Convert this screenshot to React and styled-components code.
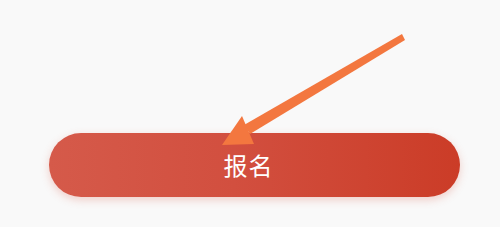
import React from 'react';
import styled, { createGlobalStyle } from 'styled-components';

const GlobalStyle = createGlobalStyle`
  html, body {
    margin: 0;
    padding: 0;
    background: #f9f9f9;
  }
`;

const Page = styled.div`
  position: relative;
  width: 500px;
  height: 227px;
  background: #f9f9f9;
  overflow: hidden;
  padding-top: 133px;
  box-sizing: border-box;
`;

const SignUpButton = styled.button`
  display: flex;
  align-items: center;
  justify-content: center;
  width: 411px;
  height: 64px;
  margin-left: 49px;
  padding: 0 12px 2px 0;
  border: none;
  border-radius: 32px;
  background: linear-gradient(90deg, #d55a4a 0%, #d24f3f 45%, #cb3c27 100%);
  box-shadow: 0 3px 8px rgba(214, 80, 60, 0.25);
  color: #fff;
  font-family: "Noto Sans CJK SC", "Noto Sans", sans-serif;
  font-size: 24px;
  letter-spacing: 1px;
`;

const Annotation = styled.svg`
  position: absolute;
  left: 0;
  top: 0;
  width: 500px;
  height: 227px;
  pointer-events: none;
`;

export default function App() {
  return (
    <>
      <GlobalStyle />
      <Page>
        <SignUpButton>报名</SignUpButton>
        <Annotation viewBox="0 0 500 227">
          <polygon points="402,34 405,40 250,134 244,125" fill="#f3773f" />
          <polygon points="242,116 254,144 222,145" fill="#f3773f" />
        </Annotation>
      </Page>
    </>
  );
}
